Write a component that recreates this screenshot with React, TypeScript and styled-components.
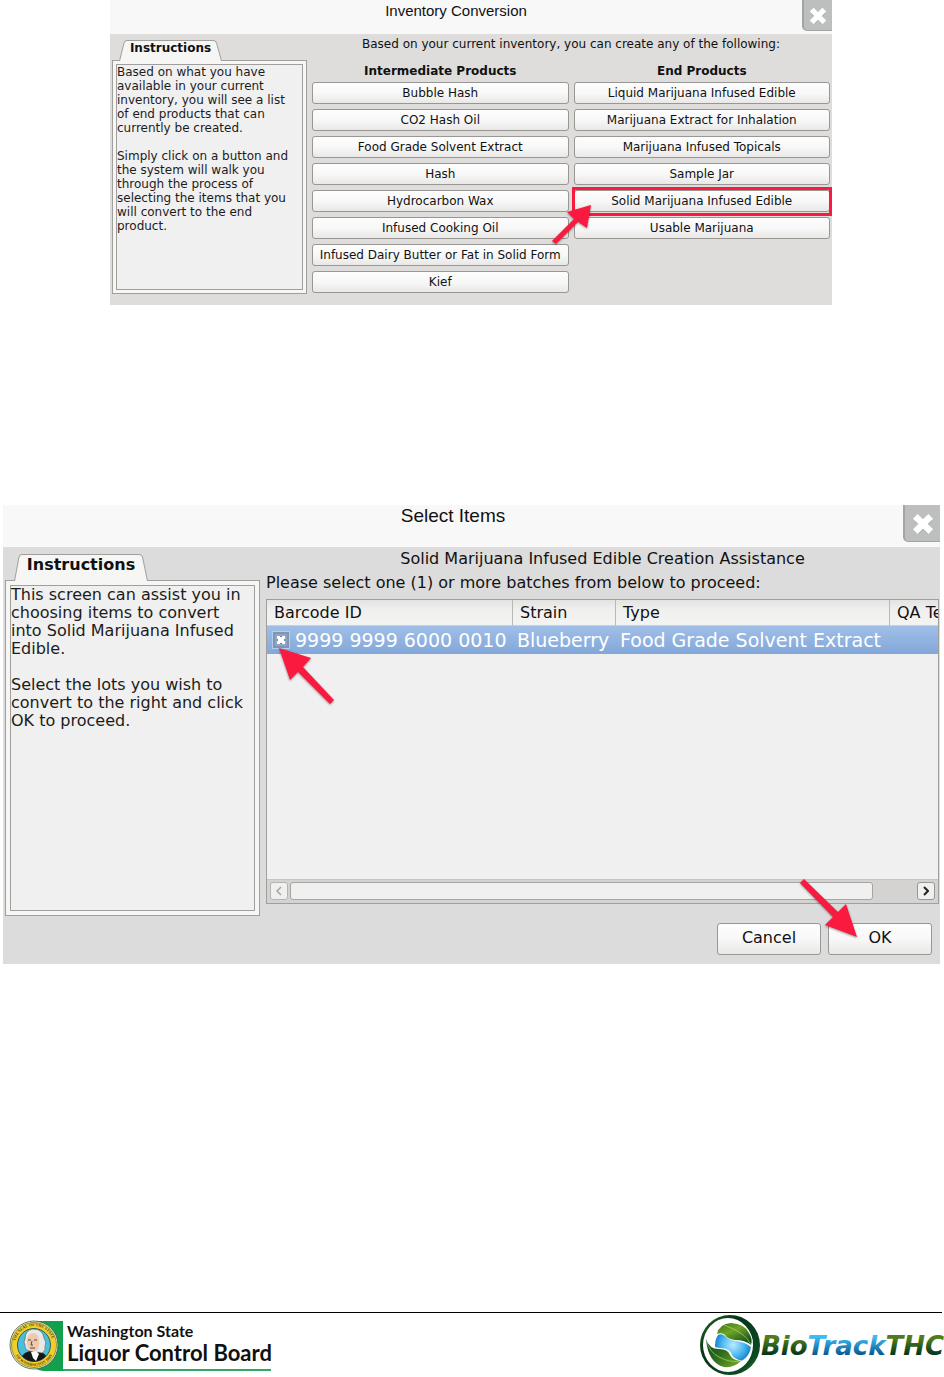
import React from "react";
import styled, { createGlobalStyle, css } from "styled-components";

const GlobalStyle = createGlobalStyle`
  *, *::before, *::after { box-sizing: border-box; }
  body { margin: 0; background: #fff; color: #111; font-family: "DejaVu Sans", sans-serif; }
  p, h1, h2, h3 { margin: 0; font-weight: normal; }
  button { font-family: inherit; color: inherit; margin: 0; }
`;

type Size = "small" | "large";
interface Sized {
  $size: Size;
}

const Page = styled.div`
  min-height: 100vh;
  display: flex;
  flex-direction: column;
`;

const Dialog = styled.section<Sized>`
  ${({ $size }) =>
    $size === "small"
      ? css`
          margin: 0 112px 200px 110px;
          background: #dedddb;
          font-size: 12px;
        `
      : css`
          margin: 0 4px 64px 3px;
          background: #dcdcdc;
          font-size: 16px;
        `}
`;

const TitleBar = styled.header<Sized>`
  display: flex;
  align-items: flex-start;
  height: ${({ $size }) => ($size === "small" ? 34 : 42)}px;
  background: #f8f8f8;
`;

const Title = styled.h1<Sized>`
  flex: 1;
  text-align: center;
  font-family: "Liberation Sans", sans-serif;
  font-size: ${({ $size }) => ($size === "small" ? 15 : 19)}px;
  line-height: 22px;
`;

const CloseButton = styled.button<Sized>`
  width: ${({ $size }) => ($size === "small" ? 30 : 37)}px;
  height: ${({ $size }) => ($size === "small" ? 31 : 37)}px;
  padding: 2px 0 0;
  display: grid;
  place-items: center;
  background: #bdbfbe;
  border: solid #a3a5a4;
  border-width: 0 0 1px 2px;
  border-radius: 0 0 0 5px;
`;

const DialogBody = styled.div<Sized>`
  display: flex;
  align-items: stretch;
  ${({ $size }) =>
    $size === "small"
      ? css`
          gap: 5px;
          padding: 2px 2px 11px;
        `
      : css`
          gap: 6px;
          padding: 0 1px 0 2px;
        `}
`;

const Side = styled.aside<Sized>`
  flex: none;
  display: flex;
  flex-direction: column;
  ${({ $size }) =>
    $size === "small"
      ? css`
          width: 195px;
          padding-top: 4px;
        `
      : css`
          width: 255px;
          padding: 7px 0 48px;
        `}
`;

const Tab = styled.h2<Sized>`
  position: relative;
  z-index: 1;
  margin-left: ${({ $size }) => ($size === "small" ? 7 : 9)}px;
  margin-bottom: -1px;
  width: ${({ $size }) => ($size === "small" ? 103 : 134)}px;
  height: ${({ $size }) => ($size === "small" ? 21 : 27)}px;
  padding-top: ${({ $size }) => ($size === "small" ? 1 : 2)}px;
  text-align: center;
  font-weight: bold;
  font-size: ${({ $size }) => ($size === "small" ? 12 : 16)}px;
  line-height: ${({ $size }) => ($size === "small" ? 15 : 18)}px;
`;

const TabShape = styled.svg`
  position: absolute;
  inset: 0;
  width: 100%;
  height: 100%;
  z-index: -1;
`;

const Panel = styled.div<Sized>`
  flex: 1;
  display: flex;
  padding: ${({ $size }) => ($size === "small" ? 3 : 4)}px;
  background: #f6f6f5;
  border: 1px solid #a09f9b;
`;

const PanelText = styled.div<Sized>`
  flex: 1;
  padding-right: 8px;
  border: 1px solid #a09f9b;
  background: #f0f0f0;
  color: #1c1c1c;
  white-space: pre-line;
  line-height: ${({ $size }) => ($size === "small" ? 14 : 18)}px;
`;

const Main = styled.div`
  flex: 1;
  min-width: 0;
`;

const Lead = styled.p<Sized>`
  text-align: center;
  line-height: ${({ $size }) => ($size === "small" ? 16 : 24)}px;
`;

const Columns = styled.div`
  display: grid;
  grid-template-columns: 1fr 1fr;
  gap: 5px;
  margin-top: 11px;
  padding-bottom: 1px;
`;

const Column = styled.div`
  display: flex;
  flex-direction: column;
  gap: 5px;
`;

const ColumnTitle = styled.h3`
  text-align: center;
  font-weight: bold;
  font-size: 12px;
  line-height: 16px;
  margin-bottom: -2px;
`;

const face = css`
  border: 1px solid #989794;
  border-radius: 3px;
  background: linear-gradient(#fdfdfd, #f8f8f8 50%, #e9e8e7);
`;

const ProductButton = styled.button`
  ${face}
  width: 100%;
  height: 22px;
  padding: 0;
  display: block;
  font-size: 12px;
  line-height: 20px;
  white-space: nowrap;
`;

const Highlight = styled.div`
  position: relative;
  &::after {
    content: "";
    position: absolute;
    inset: -3px -2px -4px;
    border: 3px solid #fb1a3f;
    pointer-events: none;
  }
`;

const Arrow = styled.svg<{ $left: number; $top: number }>`
  position: absolute;
  z-index: 2;
  left: ${({ $left }) => $left}px;
  top: ${({ $top }) => $top}px;
  overflow: visible;
  pointer-events: none;
  fill: #fb1a3f;
  filter: drop-shadow(0 1px 1px rgba(0, 0, 0, 0.4));
`;

const Prompt = styled.p`
  line-height: 24px;
`;

const ListFrame = styled.div`
  position: relative;
  margin-top: 4px;
  height: 305px;
  display: flex;
  flex-direction: column;
  border: 1px solid #a09f9b;
  background: #f0f0f0;
`;

const ListView = styled.div`
  flex: 1;
  overflow: hidden;
`;

const Table = styled.table`
  width: 100%;
  table-layout: fixed;
  border-collapse: separate;
  border-spacing: 0;
`;

const HeadCell = styled.th<{ $width?: number }>`
  width: ${({ $width }) => ($width ? `${$width}px` : "auto")};
  height: 26px;
  padding: 0 0 0 7px;
  overflow: hidden;
  text-align: left;
  font-weight: normal;
  white-space: nowrap;
  background: linear-gradient(#e3e3e2, #f0f0ef 40%, #f3f3f2);
  border-right: 1px solid #b9b8b5;
  border-bottom: 1px solid #cfcecb;
  &:last-child {
    border-right: 0;
  }
`;

const Row = styled.tr`
  color: #fff;
  font-size: 19px;
  background: linear-gradient(#a0bfe8, #82a7d9);
`;

const Cell = styled.td`
  height: 28px;
  padding: 0 0 0 4px;
  white-space: nowrap;
`;

const CheckLabel = styled.label`
  display: flex;
  align-items: center;
  gap: 6px;
  padding-left: 2px;
`;

const Check = styled.input`
  appearance: none;
  flex: none;
  display: grid;
  place-items: center;
  width: 16px;
  height: 16px;
  margin: 0;
  border: 2px solid #8195b0;
  outline: 1px solid #b4cdf0;
  background: #8fa5c4;
  &:checked::before {
    content: "";
    width: 8px;
    height: 8px;
    background: linear-gradient(45deg, transparent 35%, #fff 35% 65%, transparent 65%),
      linear-gradient(-45deg, #6e86a8 35%, #fff 35% 65%, #6e86a8 65%);
  }
`;

const ScrollBar = styled.div`
  display: flex;
  align-items: center;
  gap: 2px;
  height: 24px;
  padding: 0 3px 2px;
  background: #d4d3d1;
  border-top: 1px solid #c6c5c2;
`;

const ScrollButton = styled.button<{ $dim?: boolean }>`
  width: 18px;
  height: 18px;
  padding: 0;
  display: grid;
  place-items: center;
  border: 1px solid ${({ $dim }) => ($dim ? "#b5b4b1" : "#989794")};
  border-radius: 3px;
  background: #f0f0ef;
  color: ${({ $dim }) => ($dim ? "#a5a4a1" : "#222")};
`;

const ScrollTrack = styled.div`
  flex: 1;
  padding-right: 42px;
`;

const ScrollThumb = styled.div`
  height: 18px;
  border: 1px solid #a6a5a2;
  border-radius: 3px;
  background: #f0f0f0;
`;

const Actions = styled.div`
  display: flex;
  justify-content: flex-end;
  gap: 7px;
  padding: 19px 7px 9px 0;
`;

const ActionSlot = styled.div`
  position: relative;
`;

const ActionButton = styled.button`
  ${face}
  width: 104px;
  height: 32px;
  padding: 0 0 3px;
  font-size: 16px;
`;

const Footer = styled.footer`
  margin-top: auto;
  margin-right: 2px;
  height: 65px;
  display: flex;
  justify-content: space-between;
  border-top: 1px solid #000;
`;

const BoardLogo = styled.div`
  display: flex;
  padding: 7px 0 0 9px;
`;

const BoardName = styled.div`
  width: 208px;
  height: 51px;
  padding-left: 4px;
  border-bottom: 2px solid #2fa866;
  font-family: Lato, sans-serif;
  font-weight: bold;
  white-space: nowrap;
`;

const BoardState = styled.div`
  font-size: 16px;
  line-height: 22px;
`;

const BoardTitle = styled.div`
  font-size: 22px;
  line-height: 22px;
`;

const BrandLogo = styled.div`
  display: flex;
  margin-right: -2px;
  padding-top: 2px;
`;

function CloseIcon({ size }: { size: number }) {
  return (
    <svg width={size} height={size} viewBox="0 0 20 20" aria-hidden="true">
      <path d="M4 4L16 16M16 4L4 16" stroke="#8f9190" strokeWidth="6" transform="translate(0 1)" opacity=".5" />
      <path d="M3 3L17 17M17 3L3 17" stroke="#fff" strokeWidth="6" />
    </svg>
  );
}

function Instructions({ size, children }: { size: Size; children: React.ReactNode }) {
  const w = size === "small" ? 103 : 134;
  const h = size === "small" ? 21 : 27;
  return (
    <Side $size={size}>
      <Tab $size={size}>
        <TabShape viewBox={`0 0 ${w} ${h}`} aria-hidden="true">
          <path
            d={`M.5 ${h}L5 3Q5.500 .5 8 .5H${w - 9}Q${w - 6} .5 ${w - 5.5} 3L${w - 0.5} ${h}`}
            fill="#f6f6f5"
            stroke="#a09f9b"
          />
        </TabShape>
        Instructions
      </Tab>
      <Panel $size={size}>
        <PanelText $size={size}>{children}</PanelText>
      </Panel>
    </Side>
  );
}

const intermediate = [
  "Bubble Hash",
  "CO2 Hash Oil",
  "Food Grade Solvent Extract",
  "Hash",
  "Hydrocarbon Wax",
  "Infused Cooking Oil",
  "Infused Dairy Butter or Fat in Solid Form",
  "Kief",
];

const endProducts = [
  "Liquid Marijuana Infused Edible",
  "Marijuana Extract for Inhalation",
  "Marijuana Infused Topicals",
  "Sample Jar",
  "Solid Marijuana Infused Edible",
  "Usable Marijuana",
];

const chosen = "Solid Marijuana Infused Edible";

function Seal() {
  return (
    <svg width="54" height="51" viewBox="0 0 54 51" role="img" aria-label="State seal">
      <defs>
        <path id="sealTop" d="M6 25a19 19 0 0 1 38 0" />
        <path id="sealBottom" d="M4 25a21 21 0 0 0 42 0" />
      </defs>
      <path d="M28 1H54V51H34Q28 50 24 47Z" fill="#12a04f" />
      <circle cx="25" cy="25" r="24" fill="#f4efd0" stroke="#3a5a35" strokeWidth=".8" />
      <circle cx="25" cy="25" r="22.500" fill="#f0cf2c" stroke="#5d5a20" strokeWidth=".6" />
      <g fontFamily="Liberation Serif, serif" fontSize="4" fontWeight="bold" fill="#4b4312">
        <text>
          <textPath href="#sealTop" startOffset="4">THE SEAL OF THE STATE</textPath>
        </text>
        <text>
          <textPath href="#sealBottom" startOffset="11">OF WASHINGTON 1889</textPath>
        </text>
      </g>
      <circle cx="25" cy="25" r="16.500" fill="#49bfdc" stroke="#26403f" strokeWidth=".8" />
      <path d="M13 36Q16 32 21 31L30 32Q36 33 37 36Q32 41.500 25 41.500T13 36Z" fill="#14181a" />
      <path d="M16 19Q16 10 24 9Q34 9 35 18Q38 22 36 27Q37 31 33 33L27 32L20 31Q15 29 16 25Q14 22 16 19Z" fill="#e8e8e4" stroke="#55524c" strokeWidth=".6" />
      <path d="M18 19Q20 13 24 13Q30 14 30 20Q31 28 27 31Q23 33 19 28Q17 23 18 19Z" fill="#efc9ae" />
      <path d="M19 20h3M25 20h3M23 21l-1 4h2M21 28h5" stroke="#4c382e" strokeWidth=".9" fill="none" />
      <path d="M22 32L27 31L30 34L27 41L24 38Z" fill="#fff" />
    </svg>
  );
}

function Globe() {
  return (
    <svg width="244" height="61" viewBox="0 0 244 61" role="img" aria-label="BioTrackTHC">
      <defs>
        <linearGradient id="ring" x1="0" y1="0" x2="1" y2="1">
          <stop offset="0" stopColor="#2a6a1c" />
          <stop offset=".35" stopColor="#06351a" />
          <stop offset=".8" stopColor="#0b4a22" />
          <stop offset="1" stopColor="#4d8a1c" />
        </linearGradient>
        <radialGradient id="water">
          <stop offset="0" stopColor="#b9ecff" />
          <stop offset=".6" stopColor="#4fb9f2" />
          <stop offset="1" stopColor="#1a83cf" />
        </radialGradient>
        <linearGradient id="leafA" x1="0" y1="0" x2=".7" y2="1">
          <stop offset="0" stopColor="#3a6f1a" />
          <stop offset=".45" stopColor="#6ea525" />
          <stop offset="1" stopColor="#124d1e" />
        </linearGradient>
        <linearGradient id="leafB" x1="0" y1="0" x2="1" y2=".8">
          <stop offset="0" stopColor="#0b4520" />
          <stop offset=".5" stopColor="#2c6a1d" />
          <stop offset="1" stopColor="#6ea525" />
        </linearGradient>
        <linearGradient id="greenText" x1="0" y1="0" x2="0" y2="1">
          <stop offset=".25" stopColor="#4f7d1b" />
          <stop offset=".75" stopColor="#063a1d" />
        </linearGradient>
        <linearGradient id="blueText" x1="0" y1="0" x2="0" y2="1">
          <stop offset=".2" stopColor="#3ebcf5" />
          <stop offset=".8" stopColor="#07588f" />
        </linearGradient>
      </defs>
      <circle cx="30" cy="30" r="30" fill="url(#ring)" />
      <ellipse cx="28" cy="30" rx="25" ry="27" fill="#fff" />
      <circle cx="33" cy="30" r="18" fill="url(#water)" />
      <path d="M17 20Q18 8 31 7Q46 8 51 20Q54 26 51 32Q45 27 36 26Q28 25 25 21Q22 18 17 20Z" fill="#fff" />
      <path d="M17 19Q19 9 31 8Q45 9 49 18Q53 24 51 30Q45 25 35 25Q27 24 25 20Q22 17 17 19Z" fill="url(#leafA)" />
      <path d="M24 10Q35 14 42 19Q48 23 51 30" stroke="#b4d96a" strokeWidth=".7" fill="none" />
      <path d="M5 22Q9 33 20 33Q30 33 32 40Q34 44 43 46Q36 56 24 54Q8 50 5 22Z" fill="#fff" />
      <path d="M6 24Q9 34 19 34Q28 34 30 40Q32 45 41 46Q34 53 24 52Q8 48 6 24Z" fill="url(#leafB)" />
      <path d="M6 25Q10 38 19 42Q30 48 40 46" stroke="#b4d96a" strokeWidth=".7" fill="none" />
      <text x="61" y="40" fontFamily="DejaVu Sans, sans-serif" fontSize="26" fontWeight="bold" fontStyle="italic">
        <tspan fill="url(#greenText)">Bio</tspan>
        <tspan fill="url(#blueText)">Track</tspan>
        <tspan fill="url(#greenText)">THC</tspan>
      </text>
    </svg>
  );
}

function ProductColumn({ title, items }: { title: string; items: string[] }) {
  return (
    <Column>
      <ColumnTitle>{title}</ColumnTitle>
      {items.map((item) =>
        item === chosen ? (
          <Highlight key={item}>
            <ProductButton>{item}</ProductButton>
            <Arrow $left={-22} $top={15} width="39" height="39" aria-hidden="true">
              <path d="M39 0L15 7L22 14L0 36L4 39L26 17L35 23Z" />
            </Arrow>
          </Highlight>
        ) : (
          <ProductButton key={item}>{item}</ProductButton>
        )
      )}
    </Column>
  );
}

export default function App() {
  return (
    <Page>
      <GlobalStyle />
      <Dialog $size="small">
        <TitleBar $size="small">
          <Title $size="small">Inventory Conversion</Title>
          <CloseButton $size="small" aria-label="Close">
            <CloseIcon size={18} />
          </CloseButton>
        </TitleBar>
        <DialogBody $size="small">
          <Instructions size="small">
            {"Based on what you have available in your current inventory, you will see a list of end products that can currently be created.\n\nSimply click on a button and the system will walk you through the process of selecting the items that you will convert to the end product."}
          </Instructions>
          <Main>
            <Lead $size="small">Based on your current inventory, you can create any of the following:</Lead>
            <Columns>
              <ProductColumn title="Intermediate Products" items={intermediate} />
              <ProductColumn title="End Products" items={endProducts} />
            </Columns>
          </Main>
        </DialogBody>
      </Dialog>

      <Dialog $size="large">
        <TitleBar $size="large">
          <Title $size="large">Select Items</Title>
          <CloseButton $size="large" aria-label="Close">
            <CloseIcon size={22} />
          </CloseButton>
        </TitleBar>
        <DialogBody $size="large">
          <Instructions size="large">
            {"This screen can assist you in choosing items to convert into Solid Marijuana Infused Edible.\n\nSelect the lots you wish to convert to the right and click OK to proceed."}
          </Instructions>
          <Main>
            <Lead $size="large">Solid Marijuana Infused Edible Creation Assistance</Lead>
            <Prompt>Please select one (1) or more batches from below to proceed:</Prompt>
            <ListFrame>
              <ListView>
                <Table>
                  <thead>
                    <tr>
                      <HeadCell $width={246}>Barcode ID</HeadCell>
                      <HeadCell $width={103}>Strain</HeadCell>
                      <HeadCell $width={274}>Type</HeadCell>
                      <HeadCell>QA Te</HeadCell>
                    </tr>
                  </thead>
                  <tbody>
                    <Row>
                      <Cell>
                        <CheckLabel>
                          <Check type="checkbox" defaultChecked />
                          9999 9999 6000 0010
                        </CheckLabel>
                      </Cell>
                      <Cell>Blueberry</Cell>
                      <Cell>Food Grade Solvent Extract</Cell>
                      <Cell />
                    </Row>
                  </tbody>
                </Table>
              </ListView>
              <ScrollBar>
                <ScrollButton $dim aria-label="Scroll left">
                  <svg width="6" height="10" viewBox="0 0 6 10" fill="none" stroke="currentColor" strokeWidth="1.500">
                    <path d="M5 1L1 5L5 9" />
                  </svg>
                </ScrollButton>
                <ScrollTrack>
                  <ScrollThumb />
                </ScrollTrack>
                <ScrollButton aria-label="Scroll right">
                  <svg width="6" height="10" viewBox="0 0 6 10" fill="none" stroke="currentColor" strokeWidth="2">
                    <path d="M1 1L5 5L1 9" />
                  </svg>
                </ScrollButton>
              </ScrollBar>
              <Arrow $left={12} $top={48} width="55" height="56" aria-hidden="true">
                <path d="M0 0L32 10L24 19L55 52L51 56L19 24L11 32Z" />
              </Arrow>
            </ListFrame>
            <Actions>
              <ActionButton>Cancel</ActionButton>
              <ActionSlot>
                <ActionButton>OK</ActionButton>
                <Arrow $left={-28} $top={-44} width="57" height="58" aria-hidden="true">
                  <path d="M57 58L25 46L33 38L0 4L4 0L38 33L46 25Z" />
                </Arrow>
              </ActionSlot>
            </Actions>
          </Main>
        </DialogBody>
      </Dialog>

      <Footer>
        <BoardLogo>
          <Seal />
          <BoardName>
            <BoardState>Washington State</BoardState>
            <BoardTitle>Liquor Control Board</BoardTitle>
          </BoardName>
        </BoardLogo>
        <BrandLogo>
          <Globe />
        </BrandLogo>
      </Footer>
    </Page>
  );
}
